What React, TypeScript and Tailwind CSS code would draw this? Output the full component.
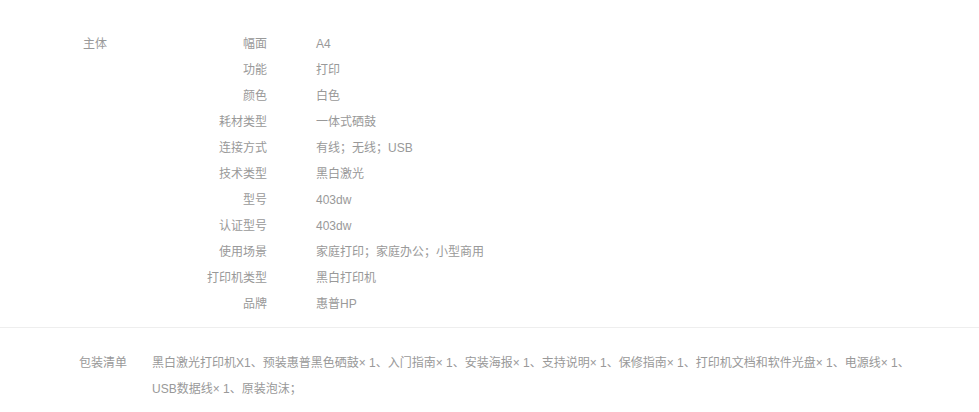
import React from "react";

const rows: [string, string][] = [
  ["幅面", "A4"],
  ["功能", "打印"],
  ["颜色", "白色"],
  ["耗材类型", "一体式硒鼓"],
  ["连接方式", "有线；无线；USB"],
  ["技术类型", "黑白激光"],
  ["型号", "403dw"],
  ["认证型号", "403dw"],
  ["使用场景", "家庭打印；家庭办公；小型商用"],
  ["打印机类型", "黑白打印机"],
  ["品牌", "惠普HP"],
];

export default function App() {
  return (
    <div
      className="w-[979px] h-[412px] bg-white text-[12px] text-[#999] overflow-hidden"
      style={{ fontFamily: '"Liberation Sans", "Noto Sans CJK SC", sans-serif' }}
    >
      <div className="flex pt-[31px] pb-[10px] pl-[83px] border-b border-[#eee]">
        <div className="w-[124px] leading-[26px]">主体</div>
        <div className="flex flex-col">
          {rows.map(([k, v]) => (
            <div key={k} className="flex leading-[26px]">
              <div className="w-[60px] text-right">{k}</div>
              <div className="ml-[49px]">{v}</div>
            </div>
          ))}
        </div>
      </div>
      <div className="flex pt-[22px] pl-[79px] leading-[26px]">
        <div className="w-[73px] shrink-0">包装清单</div>
        <div className="w-[800px]">
          <div className="whitespace-nowrap">
            黑白激光打印机X1、预装惠普黑色硒鼓× 1、入门指南× 1、安装海报× 1、支持说明× 1、保修指南× 1、打印机文档和软件光盘× 1、电源线× 1、
          </div>
          <div>USB数据线× 1、原装泡沫；</div>
        </div>
      </div>
    </div>
  );
}
